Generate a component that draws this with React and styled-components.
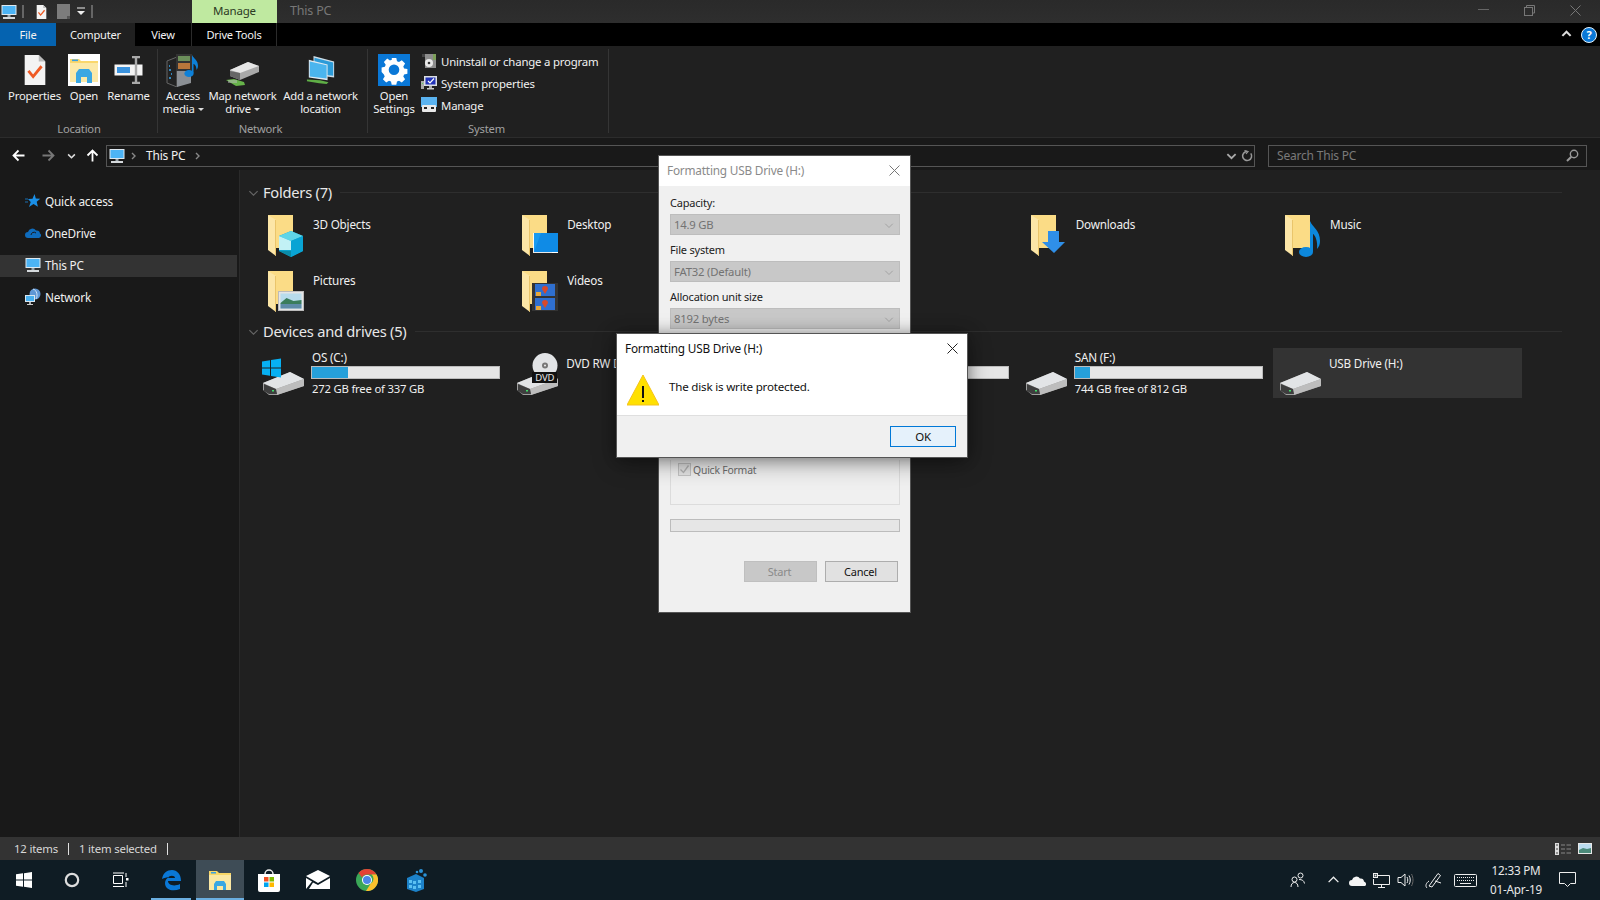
import React from 'react';
import styled, { createGlobalStyle } from 'styled-components';

const Global = createGlobalStyle`
  html, body { margin: 0; padding: 0; background: #202020; overflow: hidden; }
  * { box-sizing: border-box; }
  #root { width: 1600px; height: 900px; }
`;

const FONT = `"Noto Sans", "Open Sans", "Liberation Sans", sans-serif`;

const Screen = styled.div`
  position: relative;
  width: 1600px; height: 900px;
  display: flex; flex-direction: column;
  font-family: ${FONT}; font-size: 11.5px; letter-spacing: -0.2px;
  color: #f0f0f0; overflow: hidden; background: #202020;
`;

/* ---------- title bar ---------- */
const TitleBar = styled.div`
  height: 23px; flex: none; display: flex; align-items: stretch;
  background: linear-gradient(#2a2a2a, #2e2e2e);
`;
const Qat = styled.div`
  width: 192px; flex: none; display: flex; align-items: center;
`;
const QatSlot = styled.span`
  width: ${p => p.$w}px; flex: none; display: flex; align-items: center; justify-content: center;
`;
const ContextTab = styled.div`
  width: 85px; flex: none; background: #bfe9a0; color: #2c3a24;
  display: flex; align-items: center; justify-content: center; font-size: 11.5px; padding-bottom: 3px;
`;
const WindowTitle = styled.div`
  flex: 1; padding: 0 0 2px 13px; color: #777; display: flex; align-items: center; font-size: 12.5px;
`;
const WindowButtons = styled.div`
  width: 138px; flex: none; display: flex;
`;
const WindowButton = styled.span`
  width: 46px; display: flex; align-items: center; justify-content: center; padding: 0 ${p => p.$r || 0}px 3px 0;
`;

/* ---------- tab row ---------- */
const TabRow = styled.div`
  height: 23px; flex: none; background: #000; display: flex; align-items: stretch;
`;
const Tab = styled.div`
  width: ${p => p.$w}px; flex: none; display: flex; align-items: center; justify-content: center;
  color: #f2f2f2; font-size: 11.1px;
  background: ${p => p.$bg || 'transparent'};
  border-right: ${p => p.$sep ? '1px solid #2b2b2b' : '0'};
`;
const TabRight = styled.div`
  margin-left: auto; display: flex; align-items: center; gap: 9px; padding-right: 3px;
`;
const HelpDot = styled.span`
  width: 16px; height: 16px; border-radius: 50%; background: #0a78d7; border: 1px solid #e6f2fb;
  color: #fff; font-size: 11px; font-weight: 700; display: flex; align-items: center; justify-content: center;
  letter-spacing: 0;
`;

/* ---------- ribbon ---------- */
const Ribbon = styled.div`
  height: 92px; flex: none; background: #202020; display: flex;
  border-bottom: 1px solid #2c2c2c;
`;
const RibbonGroup = styled.div`
  width: ${p => p.$w}px; flex: none; display: flex; flex-direction: column; position: relative;
  &::after {
    content: ''; position: absolute; right: 0; top: 3px; bottom: 4px; width: 1px; background: #353535;
  }
`;
const GroupBody = styled.div`
  height: 76px; flex: none; display: flex; padding-left: ${p => p.$pad || 0}px;
`;
const GroupLabel = styled.div`
  text-align: center; color: #a0a0a0; font-size: 11.2px; line-height: 14px;
  padding-right: ${p => p.$shift || 0}px;
`;
const LargeButton = styled.div`
  width: ${p => p.$w}px; flex: none; display: flex; flex-direction: column; align-items: center;
  padding-top: 7px; text-align: center; line-height: 13px; color: #f0f0f0; white-space: nowrap;
  font-size: 11.3px;
`;
const LargeIcon = styled.span`
  width: 34px; height: 34px; flex: none; display: flex; align-items: center; justify-content: center;
  margin-bottom: 2px;
`;
const LabelLine = styled.span`
  display: block; white-space: nowrap;
`;
const Caret = styled.span`
  display: inline-block; margin-left: 3px; vertical-align: 2px;
  border-left: 3px solid transparent; border-right: 3px solid transparent; border-top: 3px solid #ddd;
`;
const SmallList = styled.div`
  display: flex; flex-direction: column; padding: 4px 0 0 2px;
`;
const SmallRow = styled.div`
  height: 22px; display: flex; align-items: center; gap: 4px; white-space: nowrap; color: #f0f0f0;
  font-size: 11.4px;
`;

/* ---------- address row ---------- */
const AddressRow = styled.div`
  height: 32px; flex: none; background: #191919; display: flex; align-items: center; padding-top: 3px;
`;
const NavButtons = styled.div`
  width: 106px; flex: none; display: flex; align-items: center;
`;
const NavSlot = styled.span`
  width: ${p => p.$w}px; flex: none; display: flex; align-items: center; justify-content: center;
`;
const AddressBox = styled.div`
  width: 1149px; flex: none; height: 22px; border: 1px solid #555; display: flex; align-items: center;
  padding-left: 2px; color: #f0f0f0; font-size: 12px;
`;
const Crumb = styled.span`
  margin: 0 ${p => p.$m || 0}px; display: flex; align-items: center;
`;
const AddressEnd = styled.div`
  margin-left: auto; display: flex; align-items: center; height: 100%;
`;
const SearchBox = styled.div`
  margin-left: 13px; width: 319px; flex: none; height: 22px; border: 1px solid #555;
  display: flex; align-items: center; justify-content: space-between;
  padding: 0 7px 0 8px; color: #7a7a7a; font-size: 12px;
`;

/* ---------- main ---------- */
const Main = styled.div`
  flex: 1; min-height: 0; display: flex;
`;
const NavPane = styled.div`
  width: 240px; flex: none; background: #191919; padding-top: 21px;
  display: flex; flex-direction: column; gap: 10px; border-right: 1px solid #2a2a2a;
`;
const NavItem = styled.div`
  height: 22px; width: 237px; display: flex; align-items: center; gap: 4px; padding: 0 0 2px 25px;
  background: ${p => p.$active ? '#333' : 'transparent'}; color: #f0f0f0; font-size: 11.8px;
`;
const Content = styled.div`
  flex: 1; background: #202020; padding: 11px 0 0 8px;
`;
const SectionHeader = styled.div`
  height: 22px; display: flex; align-items: center; color: #e8e8e8; font-size: 14.7px; letter-spacing: -0.25px;
  padding-right: 38px; margin-top: ${p => p.$top || 0}px;
`;
const SectionTitle = styled.span`
  margin-left: 4px;
`;
const SectionLine = styled.span`
  flex: 1; height: 1px; background: #2e2e2e; margin-left: 8px;
`;
const ItemGrid = styled.div`
  display: grid; grid-template-columns: repeat(5, 254.25px); grid-auto-rows: 56px;
  padding: ${p => p.$top}px 0 0 8px;
`;
const FolderItem = styled.div`
  display: flex; height: 48px; padding: 1px 0 0 12px; gap: 9px;
`;
const FolderIconBox = styled.span`
  flex: none; display: block; height: 42px;
`;
const FolderName = styled.span`
  padding-top: 1px; line-height: 16px; color: #f0f0f0; font-size: 11.7px;
`;
const DriveCell = styled.div`
  position: relative; width: 249px; height: 50px; display: flex; padding-left: 6px; gap: 7px;
  background: ${p => p.$sel ? '#333' : 'transparent'};
`;
const DriveIconBox = styled.span`
  width: 43px; flex: none; padding-top: 9px; position: relative;
`;
const DriveInfo = styled.div`
  flex: 1; display: flex; flex-direction: column; padding-top: ${p => p.$pad}px; color: #f0f0f0; font-size: 11.7px;
`;
const DriveLine = styled.div`
  line-height: 17px; height: 17px; white-space: nowrap;
`;
const DriveFree = styled(DriveLine)`
  font-size: 11.3px; padding-top: 1px;
`;
const Bar = styled.div`
  width: 189px; height: 13px; margin-left: -1px; background: #e6e6e6; border: 1px solid #bcbcbc;
  flex: none; overflow: hidden;
`;
const BarFill = styled.div`
  height: 100%; background: #26a0da;
`;

/* ---------- status / taskbar ---------- */
const StatusBar = styled.div`
  height: 23px; flex: none; background: #333; display: flex; align-items: center; padding: 0 8px 0 14px;
  color: #d8d8d8; font-size: 11.4px;
`;
const StatusSep = styled.span`
  width: 1px; height: 12px; background: #e0e0e0; margin: 0 ${p => p.$r}px 0 ${p => p.$l}px;
`;
const StatusRight = styled.div`
  margin-left: auto; display: flex; align-items: center; gap: 7px;
`;
const Taskbar = styled.div`
  height: 40px; flex: none; background: #0f1c24; display: flex; align-items: stretch;
`;
const TaskCell = styled.div`
  width: ${p => p.$w || 48}px; flex: none; display: flex; align-items: center; justify-content: center;
  position: relative;
  background: ${p => p.$active ? '#3e4c56' : 'transparent'};
  margin-left: ${p => p.$ml || 0}px;
  &::after {
    content: ''; display: ${p => (p.$run || p.$active) ? 'block' : 'none'};
    position: absolute; left: ${p => p.$active ? 0 : 4}px; right: ${p => p.$active ? 0 : 4}px; bottom: 0; height: 2px; background: #6aaee0;
  }
`;
const Tray = styled.div`
  margin-left: auto; display: flex; align-items: center; color: #f0f0f0;
`;
const TraySlot = styled.span`
  width: ${p => p.$w}px; flex: none; display: flex; align-items: center; justify-content: center;
`;
const Clock = styled.div`
  width: 70px; flex: none; text-align: center; line-height: 19px; font-size: 11.7px; color: #e8e8e8; white-space: nowrap;
`;

/* ---------- dialogs ---------- */
const FormatDialog = styled.div`
  position: absolute; left: 658px; top: 155px; width: 253px; height: 458px;
  background: #f0f0f0; border: 1px solid #555; color: #222; display: flex; flex-direction: column;
  font-size: 11px;
`;
const FormatTitle = styled.div`
  height: 30px; flex: none; background: #fff; display: flex; align-items: center; justify-content: space-between;
  padding: 0 10px 2px 8px; color: #8a8a8a; font-size: 11.8px;
`;
const FormatBody = styled.div`
  padding: 8px 10px 0 11px; display: flex; flex-direction: column; flex: 1;
`;
const FieldLabel = styled.div`
  height: 19px; line-height: 18px; color: #222; font-size: 11px;
`;
const Combo = styled.div`
  height: 21px; margin-bottom: 7px; background: #c8c8c8; border: 1px solid #bdbdbd; color: #737373;
  display: flex; align-items: center; justify-content: space-between; padding: 0 5px 0 3px; font-size: 11.3px;
  position: relative; top: 1px;
`;
const Spacer = styled.div`
  height: ${p => p.$h}px; flex: none;
`;
const GroupBox = styled.div`
  height: 45px; flex: none; border: 1px solid #dcdcdc; border-top: 0; padding: 3px 0 0 7px;
  display: flex; gap: 2px; color: #6d6d6d; align-items: flex-start; line-height: 14px; font-size: 10.4px;
`;
const Check = styled.span`
  width: 13px; height: 13px; flex: none; background: #e4e4e4; border: 1px solid #c4c4c4;
  display: flex; align-items: center; justify-content: center;
`;
const Progress = styled.div`
  height: 13px; flex: none; margin-top: 14px; background: #e6e6e6; border: 1px solid #bcbcbc;
`;
const FormatButtons = styled.div`
  display: flex; justify-content: flex-end; gap: 8px; margin-top: 29px; padding-right: 2px;
`;
const PlainButton = styled.div`
  width: 73px; height: 21px; display: flex; align-items: center; justify-content: center;
  border: 1px solid ${p => p.$off ? '#bfbfbf' : '#adadad'};
  background: ${p => p.$off ? '#c8c8c8' : '#e1e1e1'};
  color: ${p => p.$off ? '#8a8a8a' : '#111'}; font-size: 11px; padding-right: 2px;
`;
const AlertDialog = styled.div`
  position: absolute; left: 617px; top: 334px; width: 350px; height: 123px;
  background: #fff; color: #111; display: flex; flex-direction: column;
  box-shadow: 0 0 0 1px #555, 0 6px 22px rgba(0,0,0,.38), 0 0 14px rgba(0,0,0,.3);
`;
const AlertTitle = styled.div`
  height: 30px; flex: none; display: flex; align-items: center; justify-content: space-between;
  padding: 0 9px 2px 8px; font-size: 11.8px; color: #111;
`;
const AlertBody = styled.div`
  height: 52px; flex: none; display: flex; align-items: flex-start; gap: 10px; padding: 10px 0 0 10px;
  border-bottom: 1px solid #dfdfdf; font-size: 11.6px;
`;
const AlertText = styled.span`
  padding-top: 5px; line-height: 16px;
`;
const AlertFoot = styled.div`
  flex: 1; background: #f0f0f0; display: flex; justify-content: flex-end; padding: 10px 11px 0 0;
`;
const OkButton = styled.div`
  width: 66px; height: 21px; border: 1px solid #0078d7; background: #e5f1fb; display: flex;
  align-items: center; justify-content: center; font-size: 11.5px; color: #111;
`;

/* ---------- drawings ---------- */
const Pc = ({ s = 16 }) => (
  <svg width={s} height={s} viewBox="0 0 16 16">
    <rect x="0.5" y="1" width="15" height="10" fill="#dfe9f0" />
    <rect x="1.5" y="2" width="13" height="8" fill="#4db4f5" />
    <rect x="6.5" y="11" width="3" height="2" fill="#9aa5ad" />
    <rect x="2" y="13" width="12" height="2" fill="#d5d9dc" />
  </svg>
);
const Doc = ({ s = 16 }) => (
  <svg width={s} height={s} viewBox="0 0 24 32">
    <path d="M1 0h15l7 7v25H1z" fill="#f3f3f3" />
    <path d="M16 0l7 7h-7z" fill="#bbb" />
    <path d="M5 17l5 6 9-11" fill="none" stroke="#ef5a24" strokeWidth="3" />
  </svg>
);
const Floppy = () => (
  <svg width="13" height="15" viewBox="0 0 13 15"><path d="M0 0h13v15H0z" fill="#7c7c7c" /><path d="M10 12h3v3h-3z" fill="#555" /></svg>
);
const QatDrop = () => (
  <svg width="8" height="9" viewBox="0 0 8 9"><path d="M0 1h8" stroke="#eee" /><path d="M0 4h8L4 8z" fill="#eee" /></svg>
);
const QatSep = styled.span`
  width: 2px; height: 13px; border: 1px solid #666; border-width: 0 1px; display: block;
`;
const OpenFolderIcon = () => (
  <svg width="32" height="32" viewBox="0 0 32 32">
    <rect width="32" height="32" fill="#fff" />
    <path d="M2 5h9l2 2h17v21H2z" fill="#fad76c" />
    <path d="M2 9h28v19H2z" fill="#fce9a8" />
    <rect x="4" y="5.5" width="6" height="1.6" fill="#3aa0e0" />
    <path d="M8 29V19l3-4h10l3 4v10h-5v-6h-6v6z" fill="#3aa7e3" />
  </svg>
);
const RenameIcon = () => (
  <svg width="30" height="28" viewBox="0 0 30 28">
    <rect x="0.5" y="8.5" width="28" height="11" fill="#f4f4f4" />
    <rect x="3" y="11" width="13" height="6" fill="#3b93de" />
    <path d="M18 1h8M18 27h8M22 1v26" stroke="#aaa" strokeWidth="2.4" fill="none" />
  </svg>
);
const MediaIcon = () => (
  <svg width="34" height="34" viewBox="0 0 34 34">
    <path d="M1 8l10-4v30L1 30z" fill="#222" stroke="#666" />
    <path d="M11 6l14 4v20L11 34z" fill="#8b8f94" />
    <path d="M3 13h1M3 17h2M5 21h1M3 25h2" stroke="#3ba9ef" strokeWidth="1.4" />
    <rect x="10" y="1" width="16" height="17" fill="#333" />
    <rect x="12" y="3" width="12" height="5" fill="#6c8f5b" />
    <rect x="12" y="10" width="12" height="6" fill="#b8763b" />
    <ellipse cx="23" cy="20.5" rx="4.6" ry="3.6" fill="#0d80d8" />
    <path d="M26 20V2c2 4 6 5 6 11 0 2-1 3-1.500 4 0-4-2-6-3-6v9z" fill="#0d80d8" />
  </svg>
);
const MapDriveIcon = () => (
  <svg width="34" height="34" viewBox="0 -6 34 34">
    <path d="M4 11L22 3l11 4v6L14 21 4 17z" fill="#a9a9a9" />
    <path d="M4 11L22 3l11 4-19 7z" fill="#e6e6e6" />
    <path d="M4 17v-5l10 2v7z" fill="#666" />
    <path d="M0 21l8-1 10 3 1 3-9 1z" fill="#67b34a" />
    <path d="M2 21h9v3H2z" fill="#bbb" opacity=".5" />
  </svg>
);
const AddNetIcon = () => (
  <svg width="30" height="30" viewBox="0 0 32 32">
    <path d="M8 1l22 6v17l-22-3z" fill="#cfdee8" />
    <path d="M9 3l20 5v14L9 20z" fill="#2c9bd8" />
    <path d="M3 5l20 5v17L3 24z" fill="#dfe9f0" />
    <path d="M4 7l18 4v14L4 23z" fill="#4bb5ee" />
    <path d="M1 26l14 1 9 2-2 2-8-1-13-2z" fill="#5fae46" />
  </svg>
);
const GearIcon = () => (
  <svg width="32" height="32" viewBox="0 0 32 32">
    <rect width="32" height="32" fill="#0a78d7" />
    <path fill="#fff" fillRule="evenodd" d="M13.700 4h4.600l.7 3.300 2 .8 2.800-1.800 3.300 3.300-1.800 2.800.8 2 3.300.7v4.600l-3.300.7-.8 2 1.800 2.800-3.300 3.300-2.800-1.800-2 .8-.7 3.300h-4.600l-.7-3.300-2-.8-2.800 1.800-3.300-3.300 1.800-2.800-.8-2L3.600 18v-4.600l3.300-.7.8-2-1.800-2.800 3.300-3.300 2.800 1.800 2-.8zM16 10.500a5.300 5.300 0 100 10.600 5.300 5.300 0 000-10.600z" />
  </svg>
);
const UninstallIcon = () => (
  <svg width="16" height="16" viewBox="0 0 16 16">
    <rect x="1" y="1" width="14" height="14" fill="#8d8d8d" />
    <rect x="1" y="1" width="3" height="3" fill="#444" /><rect x="12" y="1" width="3" height="6" fill="#7da05a" />
    <rect x="1" y="4" width="3" height="11" fill="#222" />
    <circle cx="8" cy="10" r="4" fill="#e8e8e8" /><circle cx="8" cy="10" r="1.300" fill="#333" />
  </svg>
);
const SysPropIcon = () => (
  <svg width="16" height="16" viewBox="0 0 16 16">
    <rect x="0" y="6" width="3" height="8" fill="#aaa" /><rect x="1" y="8" width="1" height="1" fill="#5d5" />
    <rect x="3" y="1" width="13" height="10" fill="#dbdfe3" />
    <rect x="4.500" y="2.500" width="10" height="7" fill="#2233b8" />
    <path d="M7 6l2 2 4-4.500" stroke="#fff" strokeWidth="1.200" fill="none" />
    <rect x="8" y="11" width="3" height="2" fill="#aaa" /><rect x="6" y="13" width="7" height="1.500" fill="#ccc" />
  </svg>
);
const ManageIcon = () => (
  <svg width="16" height="16" viewBox="0 0 16 16">
    <rect x="0" y="0" width="16" height="10" fill="#5ab3f0" />
    <rect x="1" y="8" width="14" height="7" rx="1" fill="#e9e9e9" />
    <rect x="3" y="10" width="3" height="2" fill="#222" /><rect x="10" y="10" width="3" height="2" fill="#222" />
  </svg>
);
const Chevron = ({ dir = 'r', c = '#888', s = 8, w = 1.4 }) => {
  const d = { r: 'M3 1l3 3-3 3', d: 'M1 3l3 3 3-3', u: 'M1 5l3-3 3 3' }[dir];
  return <svg width={s} height={s} viewBox="0 0 8 8" style={{ flex: 'none' }}><path d={d} fill="none" stroke={c} strokeWidth={w} /></svg>;
};
const Arrow = ({ c = '#fff', flip, up }) => (
  <svg width="13" height="13" viewBox="0 0 13 13" style={{ transform: up ? 'rotate(90deg)' : flip ? 'scaleX(-1)' : 'none' }}>
    <path d="M12.500 6.500H1.500M6.500 1.500l-5 5 5 5" fill="none" stroke={c} strokeWidth="1.800" />
  </svg>
);
const Refresh = () => (
  <svg width="12" height="12" viewBox="0 0 12 12">
    <path d="M9.800 3.400A4.500 4.500 0 1 1 6 1.500" fill="none" stroke="#999" strokeWidth="1.500" />
    <path d="M3.500 0.500L7 1.500 5 4" fill="none" stroke="#999" strokeWidth="1.200" />
  </svg>
);
const Magnifier = () => (
  <svg width="13" height="13" viewBox="0 0 13 13">
    <circle cx="8" cy="5" r="3.700" fill="none" stroke="#999" strokeWidth="1.400" />
    <path d="M5.300 7.700L1 12" stroke="#999" strokeWidth="2" />
  </svg>
);
const StarIcon = () => (
  <svg width="16" height="16" viewBox="0 0 16 16">
    <path d="M9.500 1l1.300 4.500 4.500.3-3.600 2.900 1.200 5L8.500 11 4 14l1.700-5L3 6l4.500-.3z" fill="#1a8fe6" />
    <path d="M0 6h3M0 9h3" stroke="#1a6fb0" />
  </svg>
);
const CloudIcon = () => (
  <svg width="16" height="12" viewBox="0 0 16 12">
    <path d="M3 11a3 3 0 010-6 4.500 4.500 0 018-1.500 3.500 3.500 0 014 3 2.500 2.500 0 01-1 4.500z" fill="#0f6cbd" />
    <path d="M6 8a3 3 0 015-2" stroke="#191919" strokeWidth="1" fill="none" />
  </svg>
);
const NetIcon = () => (
  <svg width="16" height="18" viewBox="0 0 16 18">
    <circle cx="10" cy="6" r="5.500" fill="#5f97d5" />
    <path d="M8 1c4 1 5 7 3 10" stroke="#cfe3f7" fill="none" />
    <rect x="0" y="7" width="10" height="7" fill="#d9e6f0" /><rect x="1" y="8" width="8" height="5" fill="#49afee" />
    <rect x="4" y="14" width="2" height="2" fill="#aaa" /><rect x="2" y="16" width="6" height="1" fill="#ccc" />
  </svg>
);
const FolderBase = ({ children }) => (
  <svg width="36" height="42" viewBox="0 0 36 42" style={{ display: 'block' }}>
    <path d="M0 0h25v33H8z" fill="#fbdc86" />
    <path d="M0 0l8 5v36l-8-6z" fill="#fce6a7" />
    <path d="M8 5v36l-1 -1V5z" fill="#eac56b" />
    {children}
  </svg>
);
const Cube = () => (
  <g>
    <path d="M11 21l12-5 12 5v15l-12 6-12-6z" fill="#0ba3cd" />
    <path d="M11 21l12-5 12 5-12 5z" fill="#5fd5e8" />
    <path d="M11 21l12 5v9H11z" fill="#c2f1f5" />
    <path d="M23 26l12-5v15l-12 6z" fill="#09a4d4" />
    <path d="M11 36h12v6z" fill="#0a8ba8" />
  </g>
);
const DesktopOverlay = () => (
  <g>
    <rect x="11" y="18" width="25" height="20" fill="#fff" opacity=".9" />
    <path d="M12 18h24v19H12z" fill="#1a9bf0" />
    <path d="M12 37l7-19h17v19z" fill="#0f8be6" />
    <path d="M30 37h6v1h-6z" fill="#fff" />
  </g>
);
const DownloadOverlay = () => (
  <path d="M17 16h11v11h6L23 38 11 27h6z" fill="#2f8fe8" />
);
const MusicOverlay = () => (
  <g fill="#0d88dc">
    <ellipse cx="21" cy="37" rx="7" ry="5" />
    <path d="M25 36V6c3 7 10 9 10 20 0 3-1 6-3 8 1-8-2-14-4-15v18z" />
  </g>
);
const PictureOverlay = () => (
  <g>
    <rect x="10.500" y="20.500" width="25" height="19" fill="#e5e5e5" stroke="#bbb" />
    <rect x="12.500" y="22.500" width="21" height="15" fill="#b8dcec" />
    <path d="M12.500 32l6-5 7 3 8-1v4H12.500z" fill="#3a7d5c" />
    <rect x="12.500" y="33" width="21" height="4.500" fill="#5e8ba8" />
  </g>
);
const VideoOverlay = () => (
  <g>
    <rect x="10" y="12" width="26" height="28" fill="#333" />
    <rect x="13" y="13" width="20" height="12" fill="#2f6fcf" />
    <rect x="13" y="27" width="20" height="12" fill="#2f6fcf" />
    <path d="M23 15a3 3 0 013 3l-3 5-3-5a3 3 0 013-3zM23 29a3 3 0 013 3l-3 5-3-5a3 3 0 013-3z" fill="#d8492a" />
    <path d="M14 21h5v4h-5zM14 35h5v4h-5z" fill="#e7a83a" />
  </g>
);
const DriveBody = ({ children }) => (
  <svg width="44" height="38" viewBox="0 0 44 38" style={{ display: 'block', overflow: 'visible' }}>
    <path d="M1 26L28 15l14 7v7L15 38H7L1 33z" fill="#9e9e9e" />
    <path d="M1 26L28 15l14 7L14 32z" fill="#e2e4e6" />
    <path d="M14 32l28-10v7L15 38z" fill="#bdbdbd" />
    <path d="M2 27l12 5 1 5-8 0-5-3z" fill="#3e3e3e" />
    <rect x="10" y="33" width="2" height="1.500" fill="#3fe06a" />
    {children}
  </svg>
);
const WinFlag = () => (
  <path d="M0 9.500l8-1.200v7.300H0zM9 8.100l10-1.500v9H9zM0 16.600h8v7.200l-8-1.200zM9 16.600h10v9l-10-1.500z" fill="#07b0f2" transform="translate(0 -5)" />
);
const DvdOverlay = () => (
  <g>
    <circle cx="29" cy="8.500" r="12.500" fill="#e2e4e6" />
    <circle cx="29" cy="8.500" r="3" fill="#777" /><circle cx="29" cy="8.500" r="1" fill="#eee" />
    <rect x="16" y="15" width="25" height="11" fill="#111" />
  </g>
);
const DvdText = styled.span`
  position: absolute; left: 16px; top: 24px; width: 25px; text-align: center;
  color: #e8e8e8; font-size: 9.5px; line-height: 11px; letter-spacing: -.2px;
`;
const WinLogo = () => (
  <svg width="16" height="16" viewBox="0 0 16 16">
    <path d="M0 2.300l7-1v6.300H0zM8 1.200l8-1.200v7.600H8zM0 8.500h7v6.200l-7-1zM8 8.500h8V16l-8-1.200z" fill="#fff" />
  </svg>
);
const Cortana = () => (
  <svg width="16" height="16" viewBox="0 0 16 16"><circle cx="8" cy="8" r="6.200" fill="none" stroke="#ddd" strokeWidth="2.200" /></svg>
);
const TaskView = () => (
  <svg width="17" height="16" viewBox="0 0 17 16" fill="none" stroke="#fff">
    <path d="M1.500 3.500h9v8h-9zM1 1h11M1 14.500h11" /><path d="M14 1v4M14 10v5" /><rect x="14" y="6" width="2.500" height="2.500" fill="#fff" stroke="none" />
  </svg>
);
const EdgeIcon = () => (
  <svg width="20" height="21" viewBox="0 0 20 21">
    <path d="M1 9C2 3 6 0 11 0c5 0 9 4 9 11H7c0 4 6 6 12 3v5c-7 3-15 1-15-6 0-3 2-5 4-6-2 0-5 1-7 2zM7 8h7c0-3-6-3-7 0z" fill="#0a78d7" />
  </svg>
);
const ExplorerIcon = () => (
  <svg width="22" height="19" viewBox="0 0 22 19">
    <path d="M0 0h8l2 2h12v17H0z" fill="#f9d767" />
    <path d="M0 4h22v15H0z" fill="#fce8a3" />
    <rect x="2" y="1" width="5" height="1.500" fill="#3aa0e0" />
    <path d="M5 19v-6l2-3h8l2 3v6h-3v-4H8v4z" fill="#3aa7e3" />
  </svg>
);
const StoreIcon = () => (
  <svg width="24" height="24" viewBox="0 0 24 24">
    <path d="M8 6a4 4 0 018 0" fill="none" stroke="#eee" strokeWidth="1.500" />
    <path d="M1 6h22v16a2 2 0 01-2 2H3a2 2 0 01-2-2z" fill="#fff" />
    <rect x="7" y="9" width="4.500" height="4.500" fill="#f25022" /><rect x="12.500" y="9" width="4.500" height="4.500" fill="#7fba00" />
    <rect x="7" y="14.500" width="4.500" height="4.500" fill="#00a4ef" /><rect x="12.500" y="14.500" width="4.500" height="4.500" fill="#ffb900" />
  </svg>
);
const MailIcon = () => (
  <svg width="24" height="20" viewBox="0 0 24 20">
    <path d="M0 6L12 0l12 6-12 7z" fill="#fff" /><path d="M0 8l6 3.500L0 19zM3 19l4-6.500 5 2.500 12-7v11z" fill="#fff" />
  </svg>
);
const ChromeIcon = () => (
  <svg width="22" height="22" viewBox="0 0 22 22">
    <circle cx="11" cy="11" r="11" fill="#3aa757" />
    <path d="M11 0a11 11 0 019.500 5.500H11a5.500 5.500 0 00-5 3L2.500 4A11 11 0 0111 0z" fill="#e34234" />
    <path d="M20.500 5.500A11 11 0 0110 22l4.700-7.500a5.500 5.500 0 00.8-9z" fill="#fbc02d" />
    <circle cx="11" cy="11" r="5" fill="#fff" /><circle cx="11" cy="11" r="4" fill="#4a86e8" />
  </svg>
);
const PixelCube = () => (
  <svg width="22" height="24" viewBox="0 0 22 24">
    <path d="M1 10l9-4 8 4v11l-8 3-9-3z" fill="#1c82c9" />
    <path d="M3 12h3v3H3zM7 13h3v3H7zM12 12h3v3h-3zM3 17h3v3H3zM7 18h3v3H7zM12 17h3v3h-3z" fill="#5cc0f2" />
    <circle cx="15" cy="3" r="2" fill="#2b93d8" /><circle cx="19" cy="7" r="1.800" fill="#2b93d8" /><circle cx="11" cy="4" r="1.300" fill="#2b93d8" />
  </svg>
);
const People = () => (
  <svg width="16" height="16" viewBox="0 0 16 16" fill="none" stroke="#eee" strokeWidth="1">
    <circle cx="10.500" cy="3.500" r="2.500" /><circle cx="4.500" cy="7.500" r="2.500" />
    <path d="M1 15c0-3 1.500-4.500 3.500-4.500S8 12 8 15M9 7.500c3 0 5 1 5.500 4" />
  </svg>
);
const Volume = () => (
  <svg width="17" height="14" viewBox="0 0 17 14" fill="none" stroke="#eee">
    <path d="M1 4.500h3L8 1v12L4 9.500H1z" /><path d="M10 4c1 2 1 4 0 6" /><path d="M12 2.500c1.700 3 1.700 6 0 9" /><path d="M14.500 1c2 4 2 8 0 12" stroke="#666" />
  </svg>
);
const OneDriveTray = () => (
  <svg width="17" height="11" viewBox="0 0 17 11">
    <path d="M3 11a3 3 0 010-6 4.500 4.500 0 018-1.500 3.500 3.500 0 014 3A2.500 2.500 0 0116 11z" fill="#f4f4f4" />
  </svg>
);
const NetTray = () => (
  <svg width="17" height="15" viewBox="0 0 17 15" fill="none" stroke="#eee">
    <path d="M5 2.500h11.500v9H.5V6" /><path d="M8.500 11.500v2.500M5 14.500h7" /><rect x=".5" y=".5" width="4" height="4" /><rect x="1.500" y="1.500" width="2" height="2" fill="#eee" stroke="none" />
  </svg>
);
const PenTray = () => (
  <svg width="18" height="17" viewBox="0 0 18 17" fill="none" stroke="#eee">
    <path d="M5 14L14 1.500l2.500 2L8 15z" /><path d="M3 16c-2-2-1-5 2-7M11 9l6 2" />
  </svg>
);
const KeyboardTray = () => (
  <svg width="23" height="13" viewBox="0 0 23 13" fill="none" stroke="#eee">
    <rect x=".5" y=".5" width="22" height="12" rx="1" />
    <path d="M3 3.500h17M3 6.500h17" strokeDasharray="1 1" /><path d="M6 9.500h11" />
  </svg>
);
const NotifyTray = () => (
  <svg width="17" height="16" viewBox="0 0 17 16" fill="none" stroke="#eee">
    <path d="M.5.500h16v11h-5l-3 3-3-3h-5z" />
  </svg>
);
const DetailsView = () => (
  <svg width="16" height="12" viewBox="0 0 16 12">
    <rect x="0" y="0" width="4" height="12" fill="#ddd" />
    <path d="M1 2h2M1 6h2M1 10h2" stroke="#444" />
    <path d="M6 2h4M11.500 2H16M6 6h4M11.500 6H16M6 10h4M11.500 10H16" stroke="#888" />
  </svg>
);
const LargeView = () => (
  <svg width="14" height="11" viewBox="0 0 14 11">
    <rect width="14" height="11" fill="#e8e8e8" />
    <rect x="1" y="1" width="12" height="9" fill="#bcdcef" />
    <path d="M1 7l4-2 4 1 4-1v5H1z" fill="#4c8a7a" />
  </svg>
);
const CloseX = ({ c, s = 11 }) => (
  <svg width={s} height={s} viewBox="0 0 11 11"><path d="M.5.500l10 10M10.500.500l-10 10" stroke={c} strokeWidth="1" /></svg>
);
const Warn = () => (
  <svg width="32" height="32" viewBox="0 0 32 32">
    <path d="M16 1l16 30H0z" fill="#ffe000" stroke="#f4c31c" strokeWidth="1" strokeLinejoin="round" />
    <rect x="15" y="12" width="2" height="12" fill="#111" /><rect x="15" y="26" width="2" height="2" fill="#111" />
  </svg>
);
const CheckTick = () => (
  <svg width="11" height="11" viewBox="0 0 11 11"><path d="M1.500 5.500l3 3 5-7" fill="none" stroke="#b3b3b3" strokeWidth="1.300" /></svg>
);
const ComboChevron = () => <Chevron dir="d" c="#a3a3a3" s={10} w={.8} />;

const folders = [
  ['3D Objects', <Cube />],
  ['Desktop', <DesktopOverlay />],
  null,
  ['Downloads', <DownloadOverlay />],
  ['Music', <MusicOverlay />],
  ['Pictures', <PictureOverlay />],
  ['Videos', <VideoOverlay />],
];

const navItems = [
  ['Quick access', <StarIcon />],
  ['OneDrive', <CloudIcon />],
  ['This PC', <Pc />, true],
  ['Network', <NetIcon />],
];

export default function App() {
  return (
    <Screen>
      <Global />
      <TitleBar>
        <Qat>
          <QatSlot $w={17}><Pc /></QatSlot>
          <QatSlot $w={12}><QatSep /></QatSlot>
          <QatSlot $w={6} />
          <QatSlot $w={13}><Doc s={14} /></QatSlot>
          <QatSlot $w={9} />
          <QatSlot $w={13}><Floppy /></QatSlot>
          <QatSlot $w={5} />
          <QatSlot $w={12}><QatDrop /></QatSlot>
          <QatSlot $w={10}><QatSep /></QatSlot>
        </Qat>
        <ContextTab>Manage</ContextTab>
        <WindowTitle>This PC</WindowTitle>
        <WindowButtons>
          <WindowButton $r={3}><svg width="11" height="2"><rect width="11" height="1" fill="#666" /></svg></WindowButton>
          <WindowButton $r={3}>
            <svg width="11" height="11" viewBox="0 0 11 11" fill="none" stroke="#777"><path d="M2.500 2.500V.5h8v7.500h-2" /><rect x=".5" y="2.500" width="8" height="8" /></svg>
          </WindowButton>
          <WindowButton $r={3}><CloseX c="#777" /></WindowButton>
        </WindowButtons>
      </TitleBar>

      <TabRow>
        <Tab $w={56} $bg="#0563b0">File</Tab>
        <Tab $w={79} $bg="#202020">Computer</Tab>
        <Tab $w={57} $sep>View</Tab>
        <Tab $w={85} $sep>Drive Tools</Tab>
        <TabRight>
          <Chevron dir="u" c="#ddd" s={11} w={1.5} />
          <HelpDot>?</HelpDot>
        </TabRight>
      </TabRow>

      <Ribbon>
        <RibbonGroup $w={158}>
          <GroupBody $pad={6}>
            <LargeButton $w={57}><LargeIcon><Doc s={30} /></LargeIcon>Properties</LargeButton>
            <LargeButton $w={42}><LargeIcon><OpenFolderIcon /></LargeIcon>Open</LargeButton>
            <LargeButton $w={47}><LargeIcon><RenameIcon /></LargeIcon>Rename</LargeButton>
          </GroupBody>
          <GroupLabel>Location</GroupLabel>
        </RibbonGroup>
        <RibbonGroup $w={210}>
          <GroupBody>
            <LargeButton $w={50}><LargeIcon><MediaIcon /></LargeIcon><LabelLine>Access</LabelLine><LabelLine>media<Caret /></LabelLine></LargeButton>
            <LargeButton $w={69}><LargeIcon><MapDriveIcon /></LargeIcon><LabelLine>Map network</LabelLine><LabelLine>drive<Caret /></LabelLine></LargeButton>
            <LargeButton $w={87}><LargeIcon><AddNetIcon /></LargeIcon><LabelLine>Add a network</LabelLine><LabelLine>location</LabelLine></LargeButton>
          </GroupBody>
          <GroupLabel $shift={5}>Network</GroupLabel>
        </RibbonGroup>
        <RibbonGroup $w={241}>
          <GroupBody $pad={1}>
            <LargeButton $w={50}><LargeIcon><GearIcon /></LargeIcon><LabelLine>Open</LabelLine><LabelLine>Settings</LabelLine></LargeButton>
            <SmallList>
              <SmallRow><UninstallIcon />Uninstall or change a program</SmallRow>
              <SmallRow><SysPropIcon />System properties</SmallRow>
              <SmallRow><ManageIcon />Manage</SmallRow>
            </SmallList>
          </GroupBody>
          <GroupLabel $shift={4}>System</GroupLabel>
        </RibbonGroup>
      </Ribbon>

      <AddressRow>
        <NavButtons>
          <NavSlot $w={37}><Arrow /></NavSlot>
          <NavSlot $w={23}><Arrow c="#777" flip /></NavSlot>
          <NavSlot $w={22}><Chevron dir="d" c="#ddd" s={9} /></NavSlot>
          <NavSlot $w={20}><Arrow up /></NavSlot>
        </NavButtons>
        <AddressBox>
          <Pc />
          <Crumb $m={4}><Chevron /></Crumb>
          <Crumb $m={5}>This PC</Crumb>
          <Crumb $m={2}><Chevron /></Crumb>
          <AddressEnd>
            <NavSlot $w={18}><Chevron dir="d" c="#aaa" s={11} w={1.3} /></NavSlot>
            <NavSlot $w={14}><Refresh /></NavSlot>
          </AddressEnd>
        </AddressBox>
        <SearchBox>Search This PC<Magnifier /></SearchBox>
      </AddressRow>

      <Main>
        <NavPane>
          {navItems.map(([label, icon, active]) => (
            <NavItem key={label} $active={active}>{icon}{label}</NavItem>
          ))}
        </NavPane>
        <Content>
          <SectionHeader>
            <Chevron dir="d" c="#666" s={11} w={.8} />
            <SectionTitle>Folders (7)</SectionTitle>
            <SectionLine />
          </SectionHeader>
          <ItemGrid $top={11}>
            {folders.map((f, i) => f ? (
              <FolderItem key={f[0]}>
                <FolderIconBox><FolderBase>{f[1]}</FolderBase></FolderIconBox>
                <FolderName>{f[0]}</FolderName>
              </FolderItem>
            ) : <div key={i} />)}
          </ItemGrid>
          <SectionHeader $top={-6}>
            <Chevron dir="d" c="#666" s={11} w={.8} />
            <SectionTitle>Devices and drives (5)</SectionTitle>
            <SectionLine />
          </SectionHeader>
          <ItemGrid $top={6}>
            <DriveCell>
              <DriveIconBox>
                <DriveBody><WinFlag /></DriveBody>
              </DriveIconBox>
              <DriveInfo $pad={1}>
                <DriveLine>OS (C:)</DriveLine>
                <Bar><BarFill style={{ width: `${(65 / 337) * 100}%` }} /></Bar>
                <DriveFree>272 GB free of 337 GB</DriveFree>
              </DriveInfo>
            </DriveCell>
            <DriveCell>
              <DriveIconBox>
                <DriveBody><DvdOverlay /></DriveBody>
                <DvdText>DVD</DvdText>
              </DriveIconBox>
              <DriveInfo $pad={7}>
                <DriveLine>DVD RW Drive (D:)</DriveLine>
              </DriveInfo>
            </DriveCell>
            <DriveCell>
              <DriveIconBox />
              <DriveInfo $pad={18}>
                <Bar><BarFill style={{ width: '10%' }} /></Bar>
              </DriveInfo>
            </DriveCell>
            <DriveCell>
              <DriveIconBox><DriveBody /></DriveIconBox>
              <DriveInfo $pad={1}>
                <DriveLine>SAN (F:)</DriveLine>
                <Bar><BarFill style={{ width: `${(68 / 812) * 100}%` }} /></Bar>
                <DriveFree>744 GB free of 812 GB</DriveFree>
              </DriveInfo>
            </DriveCell>
            <DriveCell $sel>
              <DriveIconBox><DriveBody /></DriveIconBox>
              <DriveInfo $pad={7}>
                <DriveLine>USB Drive (H:)</DriveLine>
              </DriveInfo>
            </DriveCell>
          </ItemGrid>
        </Content>
      </Main>

      <StatusBar>
        12 items
        <StatusSep $l={10} $r={10} />
        1 item selected
        <StatusSep $l={10} $r={0} />
        <StatusRight><DetailsView /><LargeView /></StatusRight>
      </StatusBar>

      <Taskbar>
        <TaskCell><WinLogo /></TaskCell>
        <TaskCell><Cortana /></TaskCell>
        <TaskCell><TaskView /></TaskCell>
        <TaskCell $run $ml={3}><EdgeIcon /></TaskCell>
        <TaskCell $active $ml={1}><ExplorerIcon /></TaskCell>
        <TaskCell $ml={1}><StoreIcon /></TaskCell>
        <TaskCell $ml={1}><MailIcon /></TaskCell>
        <TaskCell $ml={1}><ChromeIcon /></TaskCell>
        <TaskCell $ml={2}><PixelCube /></TaskCell>
        <Tray>
          <TraySlot $w={24}><People /></TraySlot>
          <TraySlot $w={11} />
          <TraySlot $w={24}><Chevron dir="u" c="#eee" s={13} w={.8} /></TraySlot>
          <TraySlot $w={24}><OneDriveTray /></TraySlot>
          <TraySlot $w={24}><NetTray /></TraySlot>
          <TraySlot $w={24}><Volume /></TraySlot>
          <TraySlot $w={32}><PenTray /></TraySlot>
          <TraySlot $w={32}><KeyboardTray /></TraySlot>
          <Clock>12:33 PM<br />01-Apr-19</Clock>
          <TraySlot $w={32}><NotifyTray /></TraySlot>
          <TraySlot $w={17} />
        </Tray>
      </Taskbar>

      <FormatDialog>
        <FormatTitle>
          Formatting USB Drive (H:)
          <CloseX c="#777" />
        </FormatTitle>
        <FormatBody>
          <FieldLabel>Capacity:</FieldLabel>
          <Combo>14.9 GB<ComboChevron /></Combo>
          <FieldLabel>File system</FieldLabel>
          <Combo>FAT32 (Default)<ComboChevron /></Combo>
          <FieldLabel>Allocation unit size</FieldLabel>
          <Combo>8192 bytes<ComboChevron /></Combo>
          <Spacer $h={125} />
          <GroupBox><Check><CheckTick /></Check>Quick Format</GroupBox>
          <Progress />
          <FormatButtons>
            <PlainButton $off>Start</PlainButton>
            <PlainButton>Cancel</PlainButton>
          </FormatButtons>
        </FormatBody>
      </FormatDialog>

      <AlertDialog>
        <AlertTitle>
          Formatting USB Drive (H:)
          <CloseX c="#222" />
        </AlertTitle>
        <AlertBody>
          <Warn />
          <AlertText>The disk is write protected.</AlertText>
        </AlertBody>
        <AlertFoot><OkButton>OK</OkButton></AlertFoot>
      </AlertDialog>
    </Screen>
  );
}
